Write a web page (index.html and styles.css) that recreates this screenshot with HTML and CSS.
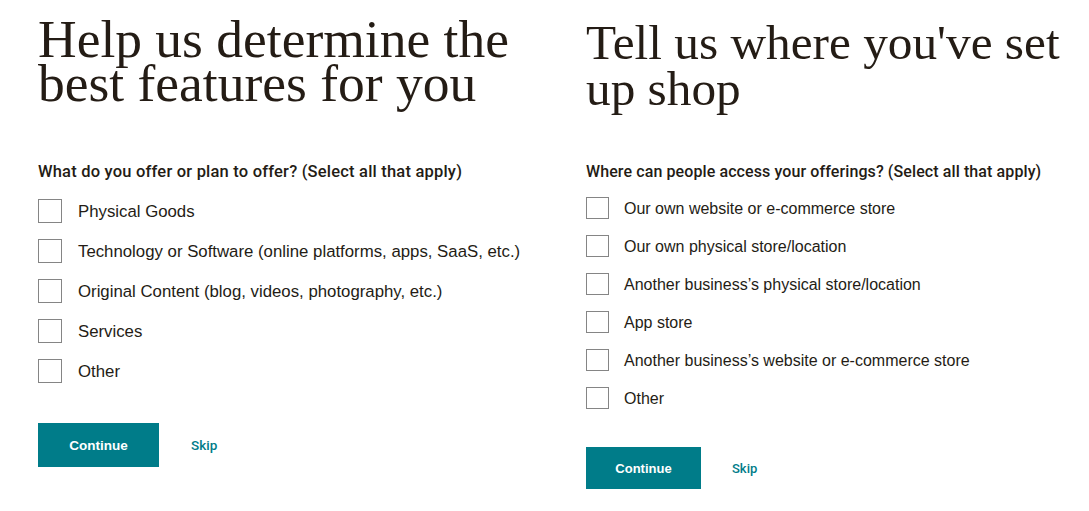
FILE: index.html
```html
<!DOCTYPE html>
<html lang="en">
<head>
<meta charset="utf-8">
<title>Onboarding</title>
<link rel="stylesheet" href="styles.css">
</head>
<body>
<main class="page">
  <section class="panel panel-left">
    <h1 class="title">Help us determine the best features for you</h1>
    <p class="question">What do you offer or plan to offer? (Select all that apply)</p>
    <ul class="options">
      <li class="option"><span class="box"></span><span class="label">Physical Goods</span></li>
      <li class="option"><span class="box"></span><span class="label">Technology or Software (online platforms, apps, SaaS, etc.)</span></li>
      <li class="option"><span class="box"></span><span class="label">Original Content (blog, videos, photography, etc.)</span></li>
      <li class="option"><span class="box"></span><span class="label">Services</span></li>
      <li class="option"><span class="box"></span><span class="label">Other</span></li>
    </ul>
    <div class="actions">
      <button class="btn">Continue</button>
      <a class="skip" href="#">Skip</a>
    </div>
  </section>
  <section class="panel panel-right">
    <h1 class="title">Tell us where you've set up shop</h1>
    <p class="question">Where can people access your offerings? (Select all that apply)</p>
    <ul class="options">
      <li class="option"><span class="box"></span><span class="label">Our own website or e-commerce store</span></li>
      <li class="option"><span class="box"></span><span class="label">Our own physical store/location</span></li>
      <li class="option"><span class="box"></span><span class="label">Another business’s physical store/location</span></li>
      <li class="option"><span class="box"></span><span class="label">App store</span></li>
      <li class="option"><span class="box"></span><span class="label">Another business’s website or e-commerce store</span></li>
      <li class="option"><span class="box"></span><span class="label">Other</span></li>
    </ul>
    <div class="actions">
      <button class="btn">Continue</button>
      <a class="skip" href="#">Skip</a>
    </div>
  </section>
</main>
</body>
</html>
```
FILE: styles.css
```css
* { box-sizing: border-box; }
html, body { margin: 0; padding: 0; background: #fff; }
body {
  color: #241c15;
  font-family: "Liberation Sans", Arial, sans-serif;
  width: 1089px;
  height: 511px;
  overflow: hidden;
}
.page {
  display: flex;
}
.panel {
  display: flex;
  flex-direction: column;
  align-items: flex-start;
}
.panel-left {
  width: 586px;
  flex: none;
  padding-left: 38px;
  padding-top: 17px;
}
.panel-right {
  width: 503px;
  flex: none;
  padding-top: 20px;
}
.title {
  margin: 0;
  font-family: "Liberation Serif", "Times New Roman", serif;
  font-weight: 400;
  color: #241c15;
}
.panel-left .title {
  font-size: 53.5px;
  line-height: 44px;
  width: 520px;
}
.panel-right .title {
  font-size: 49.3px;
  line-height: 46px;
  width: 500px;
}
.question {
  margin: 0;
  font-family: Roboto, "Liberation Sans", sans-serif;
  font-weight: 500;
  line-height: 20px;
  color: #241c15;
}
.panel-left .question { margin-top: 57px; font-size: 16.5px; letter-spacing: 0.2px; }
.panel-right .question { margin-top: 50px; font-size: 16px; letter-spacing: 0.1px; }
.options {
  list-style: none;
  margin: 0;
  padding: 0;
  display: flex;
  flex-direction: column;
}
.option {
  display: flex;
  align-items: center;
}
.box {
  flex: none;
  border: 1px solid #858585;
  background: #fff;
}
.label {
  color: #241c15;
  padding-top: 2px;
}
.panel-left .options { margin-top: 17px; gap: 16px; }
.panel-left .option { height: 24px; }
.panel-left .box { width: 24px; height: 24px; margin-right: 16px; }
.panel-left .label { font-size: 16.8px; }
.panel-right .options { margin-top: 15px; gap: 16px; }
.panel-right .option { height: 22px; }
.panel-right .box { width: 23px; height: 22px; margin-right: 15px; }
.panel-right .label { font-size: 16px; }
.actions {
  display: flex;
  align-items: center;
}
.btn {
  border: 0;
  background: #007c89;
  color: #fff;
  font-family: "Liberation Sans", Arial, sans-serif;
  font-weight: 700;
  font-size: 13.5px;
  padding: 0;
}
.skip {
  color: #007c89;
  text-decoration: none;
  font-family: Roboto, "Liberation Sans", sans-serif;
  font-weight: 500;
  font-size: 13.5px;
}
.panel-left .actions { margin-top: 40px; }
.panel-left .btn { width: 121px; height: 44px; }
.panel-left .skip { margin-left: 32px; }
.panel-right .actions { margin-top: 38px; }
.panel-right .btn { width: 115px; height: 42px; font-size: 13px; }
.panel-right .skip { margin-left: 31px; font-size: 13px; }
```
